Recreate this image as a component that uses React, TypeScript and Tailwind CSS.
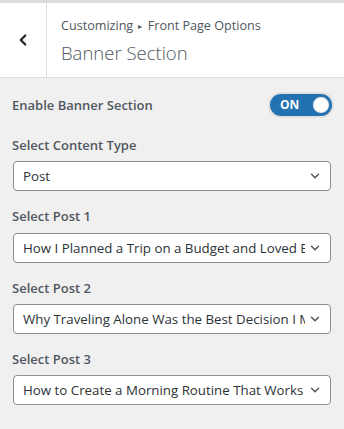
import { ChevronDown, ChevronLeft } from "lucide-react";

const font = { fontFamily: '"Open Sans", "Noto Sans", sans-serif' };

function Select({ value }: { value: string }) {
  return (
    <div className="relative mx-[13px] h-[30px] rounded-[4px] border border-[#8c8f94] bg-white">
      <div className="mr-[25px] overflow-hidden whitespace-nowrap pl-[9px] text-[13.3px] leading-[28px] text-[#2c3338]">
        {value}
      </div>
      <ChevronDown
        className="absolute right-[8px] top-[7px] h-[14px] w-[14px] text-[#50575e]"
        strokeWidth={2.5}
      />
    </div>
  );
}

function Label({ children }: { children: string }) {
  return (
    <div className="mx-[12px] text-[13px] font-semibold leading-[20px] text-[#50575e]">
      {children}
    </div>
  );
}

export default function App() {
  return (
    <div className="h-[429px] w-[344px] bg-[#f0f0f1]" style={font}>
      <div className="flex h-[78px] border-y border-t-[3px] border-[#dcdcde] bg-white">
        <div className="flex w-[47px] items-center justify-center border-r border-[#dcdcde]">
          <ChevronLeft className="h-[18px] w-[18px] text-[#1d2327]" strokeWidth={3} />
        </div>
        <div className="flex flex-col pl-[14px] pt-[13px]">
          <div className="text-[12.6px] leading-[20px] text-[#50575e]">
            Customizing <span className="mx-[2px] align-[1px] text-[8px]">▸</span> Front Page Options
          </div>
          <div className="mt-[4px] text-[18.5px] font-light leading-[26px] text-[#50575e]">
            Banner Section
          </div>
        </div>
      </div>

      <div className="flex items-center justify-between px-[12px] pt-[16px]">
        <div className="text-[13px] font-semibold leading-[20px] text-[#50575e]">
          Enable Banner Section
        </div>
        <div className="flex h-[22px] w-[62px] items-center justify-between rounded-full bg-[#2271b1] pl-[10px] pr-[2px] shadow-[0_0_0_2px_#e0e0e0]">
          <span className="text-[12px] font-bold text-white">ON</span>
          <span className="h-[18px] w-[18px] rounded-full border border-[#2271b1] bg-white shadow-[inset_0_0_2px_#ccc]" />
        </div>
      </div>

      <div className="mt-[19px] flex flex-col">
        <Label>Select Content Type</Label>
        <div className="mt-[6px]">
          <Select value="Post" />
        </div>
        <div className="mt-[15px]">
          <Label>Select Post 1</Label>
        </div>
        <div className="mt-[7px]">
          <Select value="How I Planned a Trip on a Budget and Loved Every Minute" />
        </div>
        <div className="mt-[15px]">
          <Label>Select Post 2</Label>
        </div>
        <div className="mt-[6px]">
          <Select value="Why Traveling Alone Was the Best Decision I Made" />
        </div>
        <div className="mt-[15px]">
          <Label>Select Post 3</Label>
        </div>
        <div className="mt-[6px]">
          <Select value="How to Create a Morning Routine That Works for You" />
        </div>
      </div>
    </div>
  );
}
